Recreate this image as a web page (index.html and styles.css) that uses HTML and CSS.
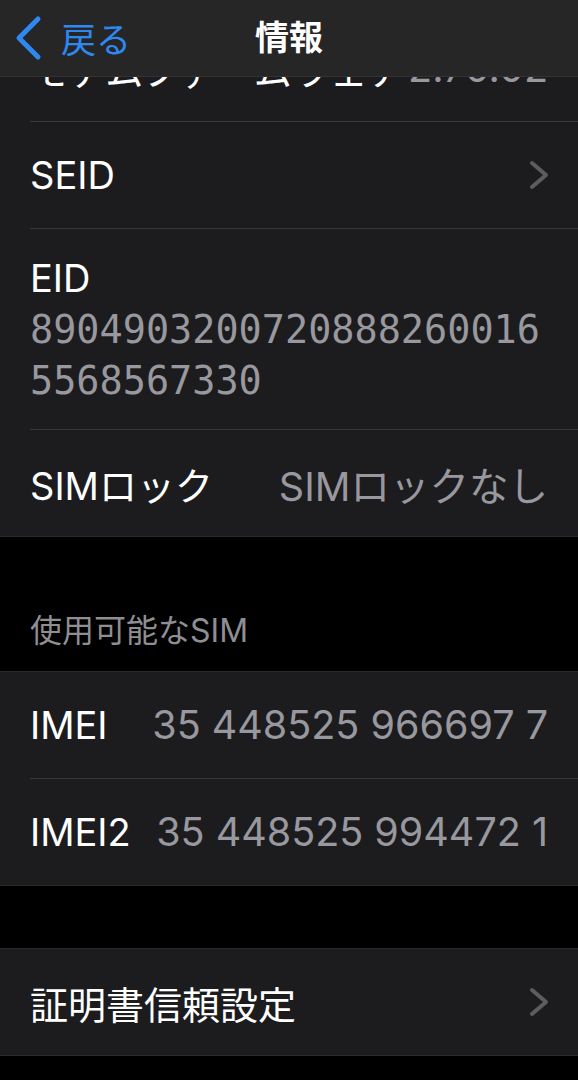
FILE: index.html
```html
<!DOCTYPE html>
<html lang="ja">
<head>
<meta charset="UTF-8">
<meta name="viewport" content="width=device-width, initial-scale=1.0">
<link rel="stylesheet" href="styles.css">
<title>情報</title>
</head>
<body>
<div id="navbar">
  <div class="back">
    <svg width="30" height="46" viewBox="0 0 30 46">
      <polyline points="24,4 5,23 24,42" fill="none" stroke="#2f88f0" stroke-width="5" stroke-linecap="round" stroke-linejoin="round"/>
    </svg>
    <span>戻る</span>
  </div>
  <div class="title">情報</div>
</div>

<div id="content">
  <div class="group first">
    <div class="row">
      <span class="label">モデムファームウェア</span>
      <span class="value">2.70.02</span>
    </div>
    <div class="row">
      <span class="label">SEID</span>
      <svg class="chevron" width="20" height="30" viewBox="0 0 20 30">
        <polyline points="3,3 17,15 3,27" fill="none" stroke="#5c5c61" stroke-width="4" stroke-linecap="round" stroke-linejoin="round"/>
      </svg>
    </div>
    <div class="row tall">
      <span class="label">EID</span>
      <span class="value mono">89049032007208882600165568567330</span>
    </div>
    <div class="row">
      <span class="label">SIMロック</span>
      <span class="value">SIMロックなし</span>
    </div>
  </div>

  <div class="header">使用可能なSIM</div>
  <div class="group">
    <div class="row">
      <span class="label">IMEI</span>
      <span class="value">35 448525 966697 7</span>
    </div>
    <div class="row">
      <span class="label">IMEI2</span>
      <span class="value">35 448525 994472 1</span>
    </div>
  </div>

  <div class="spacer"></div>
  <div class="group">
    <div class="row">
      <span class="label">証明書信頼設定</span>
      <svg class="chevron" width="20" height="30" viewBox="0 0 20 30">
        <polyline points="3,3 17,15 3,27" fill="none" stroke="#5c5c61" stroke-width="4" stroke-linecap="round" stroke-linejoin="round"/>
      </svg>
    </div>
  </div>
</div>
</body>
</html>
```

FILE: styles.css
```css
body {
  margin: 0;
  background-color: #000;
  color: #fff;
  font-family: Inter, "Noto Sans CJK JP", sans-serif;
  height: 1080px;
  overflow: hidden;
}
#navbar {
  position: absolute;
  top: 0;
  left: 0;
  right: 0;
  height: 76px;
  background-color: #262626;
  border-bottom: 1px solid #333335;
  display: flex;
  align-items: center;
  justify-content: center;
  z-index: 2;
}
.back {
  position: absolute;
  left: 14px;
  top: 12px;
  display: flex;
  align-items: center;
  gap: 17px;
  color: #2f88f0;
  font-size: 35px;
}
.title {
  font-size: 34px;
  font-weight: 600;
  margin-top: -6px;
}
#content {
  padding-top: 15px;
}
.group {
  background-color: #1c1c1e;
  border-top: 1px solid #2a2a2c;
  border-bottom: 1px solid #2a2a2c;
}
.group.first {
  border-top: none;
}
.row {
  margin-left: 30px;
  padding-right: 30px;
  height: 106px;
  border-bottom: 1px solid #38383a;
  display: flex;
  align-items: center;
  justify-content: space-between;
  font-size: 38px;
}
.row:last-child {
  border-bottom: none;
}
.row.tall {
  height: 200px;
  flex-direction: column;
  align-items: flex-start;
  justify-content: center;
  line-height: 51px;
}
.value {
  color: #98989e;
  font-size: 39.5px;
}
.mono {
  font-family: "DejaVu Sans Mono", monospace;
  font-size: 38.5px;
  word-break: break-all;
}
.chevron {
  display: block;
  margin-right: -1px;
}
.header {
  height: 134px;
  box-sizing: border-box;
  display: flex;
  align-items: flex-end;
  padding: 0 30px 20px;
  font-size: 32px;
  color: #8e8e93;
}
.spacer {
  height: 62px;
}
```
